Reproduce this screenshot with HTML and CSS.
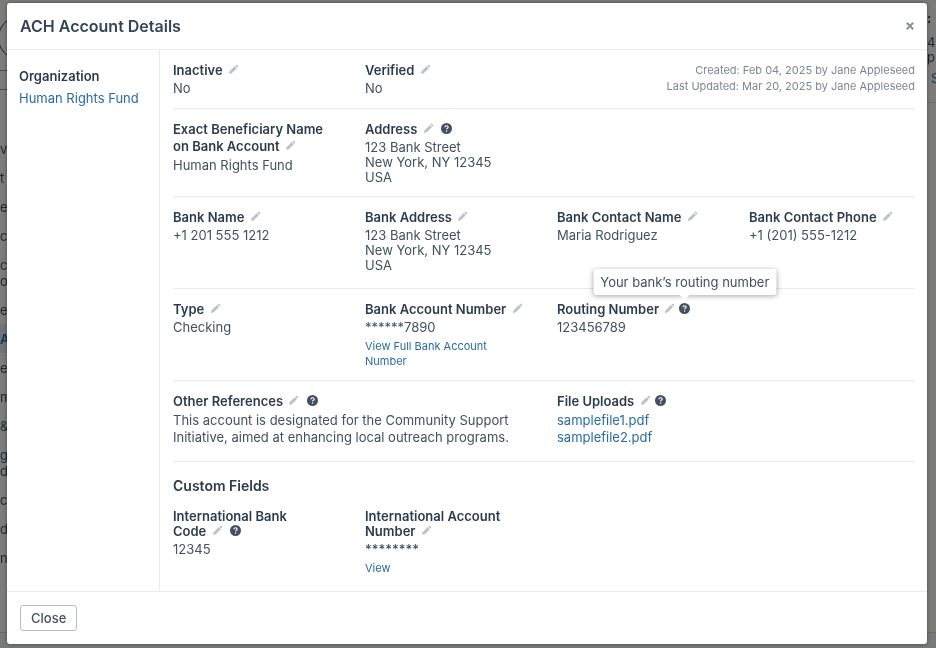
FILE: index.html
```html
<!DOCTYPE html>
<html lang="en">
<head>
  <meta charset="UTF-8">
  <meta name="viewport" content="width=device-width, initial-scale=1.0">
  <title>ACH Account Details</title>
  <link rel="stylesheet" href="styles.css">
</head>
<body>
  <!-- Shared icons -->
  <svg class="sprite" aria-hidden="true">
    <symbol id="pencil" viewBox="0 0 12 12">
      <path d="M1 11l.8-3.1L7.4 2.3l2.3 2.3L4.1 10.2z"/>
      <path d="M8 1.7l.6-.6c.4-.4 1.1-.4 1.5 0l.8.8c.4.4.4 1.1 0 1.5l-.6.6z"/>
    </symbol>
    <symbol id="help" viewBox="0 0 12 12">
      <circle cx="6" cy="6" r="6"/>
      <path d="M4.3 4.6c0-1 .8-1.6 1.8-1.6s1.7.6 1.7 1.5c0 1.2-1.7 1.2-1.7 2.4" fill="none" stroke="#fff" stroke-width="1.3"/>
      <circle cx="6.1" cy="8.8" r=".8" fill="#fff"/>
    </symbol>
  </svg>

  <!-- Page behind the modal -->
  <div class="page" aria-hidden="true">
    <div class="page-left">
      <div class="page-avatar"></div>
      <div class="page-tab"></div>
      <ul class="page-nav">
        <li>vi</li>
        <li>t</li>
        <li>e</li>
        <li>c</li>
        <li>c<br>oli</li>
        <li>es</li>
        <li class="active">A</li>
        <li>e</li>
        <li>m</li>
        <li>&amp;</li>
        <li>g<br>d</li>
        <li>c</li>
        <li>d</li>
        <li>nl</li>
      </ul>
    </div>
    <div class="page-right">
      <b>:</b>
      <p>4,<br>pl</p>
      <p class="page-link">S</p>
    </div>
    <div class="page-bottom"></div>
  </div>

  <div class="overlay">
    <div class="modal" role="dialog" aria-labelledby="modal-title">
      <header class="modal-header">
        <h1 id="modal-title">ACH Account Details</h1>
        <button class="modal-x" type="button" aria-label="Dismiss">
          <svg viewBox="0 0 8 8"><path d="M.8.8l6.4 6.4M7.2.8L.8 7.2"/></svg>
        </button>
      </header>

      <div class="modal-body">
        <aside class="side">
          <h2 class="label">Organization</h2>
          <a href="#">Human Rights Fund</a>
        </aside>

        <main class="details">
          <section class="row">
            <div class="field">
              <h2 class="label">Inactive <button class="edit" type="button" aria-label="Edit"><svg><use href="#pencil"/></svg></button></h2>
              <p>No</p>
            </div>
            <div class="field">
              <h2 class="label">Verified <button class="edit" type="button" aria-label="Edit"><svg><use href="#pencil"/></svg></button></h2>
              <p>No</p>
            </div>
            <div class="field span-2 meta">
              Created: Feb 04, 2025 by Jane Appleseed<br>
              Last Updated: Mar 20, 2025 by Jane Appleseed
            </div>
          </section>

          <section class="row">
            <div class="field">
              <h2 class="label tall">Exact Beneficiary Name<br>on Bank Account <button class="edit" type="button" aria-label="Edit"><svg><use href="#pencil"/></svg></button></h2>
              <p>Human Rights Fund</p>
            </div>
            <div class="field">
              <h2 class="label">Address <button class="edit" type="button" aria-label="Edit"><svg><use href="#pencil"/></svg></button> <button class="help" type="button" aria-label="Help"><svg><use href="#help"/></svg></button></h2>
              <p>123 Bank Street<br>New York, NY 12345<br>USA</p>
            </div>
          </section>

          <section class="row roomy">
            <div class="field">
              <h2 class="label">Bank Name <button class="edit" type="button" aria-label="Edit"><svg><use href="#pencil"/></svg></button></h2>
              <p>+1 201 555 1212</p>
            </div>
            <div class="field">
              <h2 class="label">Bank Address <button class="edit" type="button" aria-label="Edit"><svg><use href="#pencil"/></svg></button></h2>
              <p>123 Bank Street<br>New York, NY 12345<br>USA</p>
            </div>
            <div class="field">
              <h2 class="label">Bank Contact Name <button class="edit" type="button" aria-label="Edit"><svg><use href="#pencil"/></svg></button></h2>
              <p>Maria Rodriguez</p>
            </div>
            <div class="field">
              <h2 class="label">Bank Contact Phone <button class="edit" type="button" aria-label="Edit"><svg><use href="#pencil"/></svg></button></h2>
              <p>+1 (201) 555-1212</p>
            </div>
          </section>

          <section class="row">
            <div class="field">
              <h2 class="label">Type <button class="edit" type="button" aria-label="Edit"><svg><use href="#pencil"/></svg></button></h2>
              <p>Checking</p>
            </div>
            <div class="field">
              <h2 class="label">Bank Account Number <button class="edit" type="button" aria-label="Edit"><svg><use href="#pencil"/></svg></button></h2>
              <p>******7890</p>
              <a class="view" href="#">View Full Bank Account<br>Number</a>
            </div>
            <div class="field">
              <h2 class="label">Routing Number <button class="edit" type="button" aria-label="Edit"><svg><use href="#pencil"/></svg></button><button class="help" type="button" aria-describedby="routing-tip" aria-label="Help"><svg><use href="#help"/></svg><span class="tooltip" id="routing-tip" role="tooltip">Your bank’s routing number</span></button></h2>
              <p>123456789</p>
            </div>
          </section>

          <section class="row roomy">
            <div class="field span-2">
              <h2 class="label">Other References <button class="edit" type="button" aria-label="Edit"><svg><use href="#pencil"/></svg></button> <button class="help" type="button" aria-label="Help"><svg><use href="#help"/></svg></button></h2>
              <p class="tall">This account is designated for the Community Support Initiative, aimed at enhancing local outreach programs.</p>
            </div>
            <div class="field">
              <h2 class="label">File Uploads <button class="edit" type="button" aria-label="Edit"><svg><use href="#pencil"/></svg></button><button class="help" type="button" aria-label="Help"><svg><use href="#help"/></svg></button></h2>
              <p class="tall"><a href="#">samplefile1.pdf</a><br><a href="#">samplefile2.pdf</a></p>
            </div>
          </section>

          <h2 class="section-title">Custom Fields</h2>
          <section class="row roomy">
            <div class="field">
              <h3 class="label short">International Bank<br>Code <button class="edit" type="button" aria-label="Edit"><svg><use href="#pencil"/></svg></button> <button class="help" type="button" aria-label="Help"><svg><use href="#help"/></svg></button></h3>
              <p>12345</p>
            </div>
            <div class="field">
              <h3 class="label short">International Account<br>Number <button class="edit" type="button" aria-label="Edit"><svg><use href="#pencil"/></svg></button></h3>
              <p class="masked">********</p>
              <a class="view" href="#">View</a>
            </div>
          </section>
        </main>
      </div>

      <footer class="modal-footer">
        <button class="close-button" type="button">Close</button>
      </footer>
    </div>
  </div>
</body>
</html>
```
FILE: styles.css
```css
* {
  box-sizing: border-box;
}

body {
  margin: 0;
  font-family: Inter, sans-serif;
  font-size: 13px;
  line-height: 16px;
  color: #415062;
  background: #f8f8f7;
}

h1, h2, h3, p, ul {
  margin: 0;
  padding: 0;
}

a {
  color: #2a6ba5;
  text-decoration: none;
}

button {
  font: inherit;
  color: inherit;
  padding: 0;
  border: none;
  background: none;
  cursor: pointer;
}

.sprite {
  display: none;
}

/* Page behind the modal */
.page {
  position: fixed;
  inset: 0;
  overflow: hidden;
  display: grid;
  grid-template-columns: 7px 1fr 9px;
  grid-template-rows: 1fr 16px;
}

.page-left,
.page-right {
  overflow: hidden;
}

.page-right {
  grid-column: 3;
  padding-top: 10px;
}

.page-right p {
  padding-top: 9px;
  line-height: 15px;
}

.page-right .page-link {
  color: #2a6ba5;
  padding: 6px 0 16px 4px;
  border-bottom: 1px solid #d8d8d8;
}

.page-bottom {
  grid-column: 1 / -1;
  border-top: 1px solid #d0d0d0;
  background: #eff1f1;
}

.page-avatar {
  width: 44px;
  height: 44px;
  margin: 16px 0 10px -2px;
  border: 1px solid #303c48;
  border-radius: 50%;
}

.page-tab {
  height: 20px;
  margin-bottom: 44px;
  border: solid #999;
  border-width: 1px 0;
}

.page-nav {
  list-style: none;
}

.page-nav li {
  padding: 7px 0 6px;
}

.page-nav .active {
  color: #2a6ba5;
  font-weight: 600;
  background: #e2e8ee;
}

/* Modal */
.overlay {
  position: relative;
  min-height: 100vh;
  padding: 3px 9px 4px 7px;
  background: rgba(0, 0, 0, 0.5);
}

.modal {
  background: #fff;
  border-radius: 3px;
  box-shadow: 0 0 4px rgba(0, 0, 0, 0.4);
}

.modal-header {
  display: flex;
  justify-content: space-between;
  align-items: center;
  height: 47px;
  padding: 0 13px;
  border-bottom: 1px solid #e9ebed;
}

.modal-header h1 {
  font-size: 16px;
  font-weight: 600;
  color: #36445a;
}

.modal-x svg {
  display: block;
  width: 8px;
  height: 8px;
  fill: none;
  stroke: #8293a1;
  stroke-width: 2;
}

.modal-body {
  display: flex;
}

.side {
  flex: 0 0 153px;
  padding: 18px 12px;
  border-right: 1px solid #e9ebed;
}

.side a {
  display: block;
  padding-top: 6px;
}

.details {
  flex: 1;
  padding: 0 12px 0 13px;
}

.row {
  display: grid;
  grid-template-columns: repeat(4, 1fr);
  column-gap: 26px;
  min-height: 59px;
  padding: 12px 0 11px;
  border-bottom: 1px solid #e9ebed;
}

.row.roomy {
  padding-bottom: 15px;
}

.row:last-child {
  border-bottom: none;
}

.span-2 {
  grid-column: span 2;
}

.field p {
  padding-top: 3px;
  line-height: 15px;
}

.label {
  font-size: 13px;
  font-weight: 600;
  color: #2d3b4e;
}

.label.short {
  line-height: 15px;
}

.label.tall,
.field p.tall {
  line-height: 17px;
}

.field .masked {
  font-weight: 500;
}

.meta {
  font-size: 11px;
  color: #7b8794;
  text-align: right;
}

.edit,
.help {
  margin-left: 2px;
}

.help {
  position: relative;
}

.edit svg,
.help svg {
  display: block;
  width: 11px;
  height: 11px;
}

.edit svg {
  fill: #bcc3c8;
}

.help svg {
  fill: #44505f;
}

.edit + .help {
  margin-left: 4px;
}

.tooltip {
  position: absolute;
  bottom: 19px;
  left: 50%;
  transform: translateX(-50%);
  padding: 5px 7px;
  border-radius: 3px;
  background: #fff;
  box-shadow: 0 1px 5px rgba(0, 0, 0, 0.35);
  font-weight: 400;
  color: #415062;
  white-space: nowrap;
}

.tooltip::after {
  content: "";
  position: absolute;
  top: 100%;
  left: 50%;
  margin-left: -5px;
  border: 5px solid transparent;
  border-top-color: #fff;
  border-bottom: none;
}

.view {
  display: block;
  padding-top: 4px;
  font-size: 11px;
  line-height: 15px;
}

.section-title {
  padding: 16px 0 3px;
  font-size: 14px;
  font-weight: 600;
  color: #2d3b4e;
}

.modal-footer {
  padding: 13px;
  border-top: 1px solid #e9ebed;
}

.close-button {
  height: 26px;
  padding: 0 10px;
  border: 1px solid #b4bdc6;
  border-radius: 3px;
  font-weight: 500;
}
```
